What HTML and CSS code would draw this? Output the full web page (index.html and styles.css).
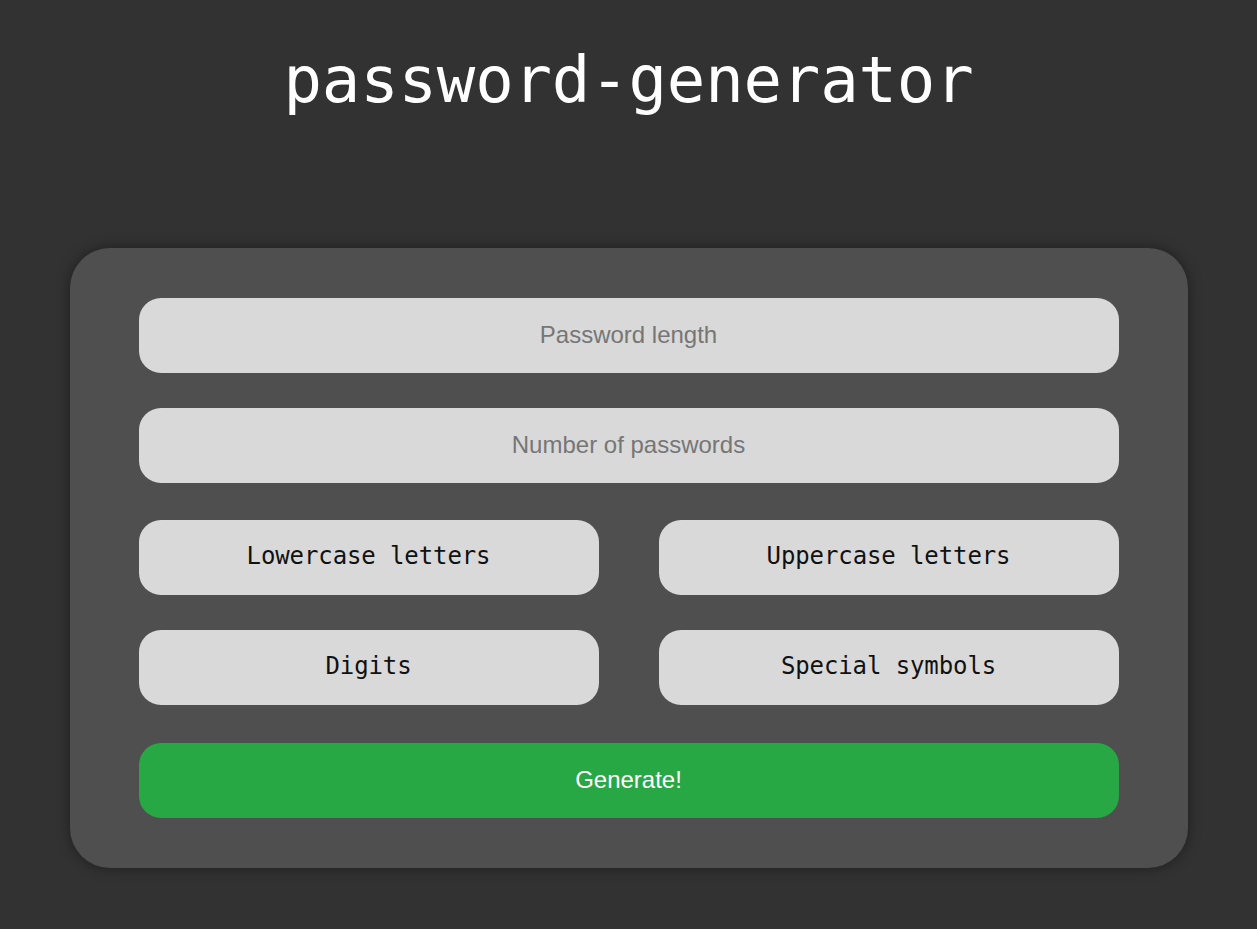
FILE: index.html
```html
<!DOCTYPE html>
<html lang="en">
<head>
<meta charset="utf-8">
<title>password-generator</title>
<link rel="stylesheet" href="styles.css">
</head>
<body>
<h1 class="title">password-generator</h1>
<main class="card">
  <input class="field field-first" type="text" inputmode="numeric" placeholder="Password length">
  <input class="field field-second" type="text" inputmode="numeric" placeholder="Number of passwords">
  <div class="options">
    <button class="option" type="button">Lowercase letters</button>
    <button class="option" type="button">Uppercase letters</button>
  </div>
  <div class="options options-last">
    <button class="option" type="button">Digits</button>
    <button class="option" type="button">Special symbols</button>
  </div>
  <button class="generate" type="button">Generate!</button>
</main>
</body>
</html>
```
FILE: styles.css
```css
html, body {
  margin: 0;
  padding: 0;
}
body {
  background: #323232;
  min-height: 929px;
  display: flex;
  flex-direction: column;
  align-items: center;
  font-family: "DejaVu Sans Mono", "Liberation Mono", monospace;
}
.title {
  margin: 40px 0 0;
  height: 80px;
  font-size: 64px;
  line-height: 80px;
  font-weight: normal;
  color: #ffffff;
  letter-spacing: -0.2px;
}
.card {
  margin-top: 128px;
  width: 980px;
  padding: 50px 69px 50px 69px;
  background: #4f4f4f;
  border-radius: 40px;
  box-shadow: 0 0 14px rgba(0, 0, 0, 0.4);
  display: flex;
  flex-direction: column;
}
.field {
  box-sizing: border-box;
  height: 75px;
  width: 100%;
  border: none;
  border-radius: 22px;
  background: #d9d9d9;
  text-align: center;
  font-family: "Liberation Sans", Arial, sans-serif;
  font-size: 24px;
  color: #222;
  outline: none;
  padding: 0 0 2px;
}
.field::placeholder {
  color: #767676;
}
.field-second {
  margin-top: 35px;
}
.options {
  margin-top: 37px;
  display: grid;
  grid-template-columns: 1fr 1fr;
  column-gap: 60px;
}
.options-last {
  margin-top: 35px;
}
.option {
  height: 75px;
  border: none;
  border-radius: 22px;
  background: #d9d9d9;
  color: #111;
  font-family: "DejaVu Sans Mono", "Liberation Mono", monospace;
  font-size: 24px;
  letter-spacing: -0.1px;
  padding: 0 0 4px;
  cursor: pointer;
}
.generate {
  margin-top: 38px;
  height: 75px;
  border: none;
  border-radius: 22px;
  background: #28a745;
  color: #ffffff;
  font-family: "Liberation Sans", Arial, sans-serif;
  font-size: 24px;
  padding: 0 0 2px;
  cursor: pointer;
}
```
